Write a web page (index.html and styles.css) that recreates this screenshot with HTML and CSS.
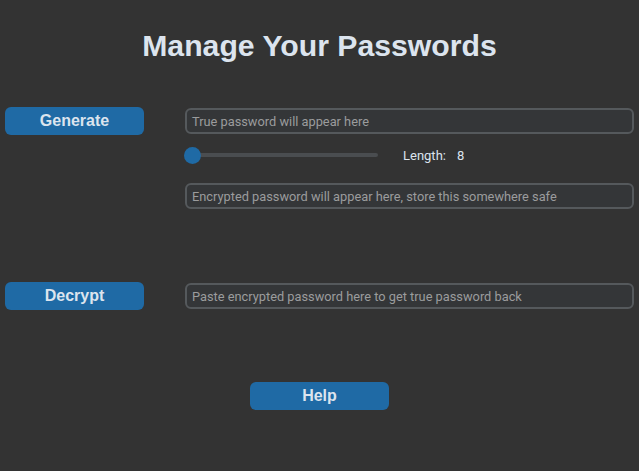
FILE: index.html
```html
<!DOCTYPE html>
<html lang="en">
<head>
<meta charset="utf-8">
<title>Manage Your Passwords</title>
<link rel="stylesheet" href="styles.css">
</head>
<body>
<main class="app">
  <h1 class="title">Manage Your Passwords</h1>

  <section class="row row-generate">
    <button class="btn">Generate</button>
    <div class="col">
      <div class="entry"><span class="placeholder">True password will appear here</span></div>
      <div class="slider-row">
        <div class="slider">
          <div class="track"></div>
          <div class="thumb"></div>
        </div>
        <span class="label">Length:</span>
        <span class="label value">8</span>
      </div>
      <div class="entry entry-enc"><span class="placeholder">Encrypted password will appear here, store this somewhere safe</span></div>
    </div>
  </section>

  <section class="row row-decrypt">
    <button class="btn">Decrypt</button>
    <div class="col">
      <div class="entry"><span class="placeholder">Paste encrypted password here to get true password back</span></div>
    </div>
  </section>

  <div class="help-wrap">
    <button class="btn">Help</button>
  </div>
</main>
</body>
</html>
```

FILE: styles.css
```css
html, body {
  margin: 0;
  padding: 0;
  background: #333333;
  height: 100%;
}

.app {
  padding: 0 5px 0 5px;
  font-family: Roboto, "Liberation Sans", sans-serif;
}

.title {
  margin: 0;
  padding-top: 29px;
  font-family: "Liberation Sans", Arial, sans-serif;
  font-weight: bold;
  font-size: 30.2px;
  line-height: 34px;
  color: #dce4ee;
  text-align: center;
}

.row {
  display: grid;
  grid-template-columns: 139px 1fr;
  column-gap: 41px;
  align-items: start;
}

.row-generate {
  margin-top: 44px;
}

.row-decrypt {
  margin-top: 73px;
}

.btn {
  display: block;
  width: 139px;
  height: 28px;
  margin: 0;
  padding: 0;
  border: none;
  border-radius: 6px;
  background: #1f6aa5;
  color: #dce4ee;
  font-family: "Liberation Sans", Arial, sans-serif;
  font-weight: bold;
  font-size: 16px;
  line-height: 28px;
  text-align: center;
}

.col {
  display: flex;
  flex-direction: column;
  margin-top: 1px;
}

.entry {
  box-sizing: border-box;
  height: 26px;
  border: 2px solid #55595c;
  border-radius: 6px;
  background: #343638;
  padding: 0 0 0 5px;
  display: flex;
  align-items: center;
}

.placeholder {
  font-size: 12.8px;
  color: #9b9c9d;
  white-space: nowrap;
}

.slider-row {
  display: flex;
  align-items: center;
  height: 17px;
  margin-top: 13px;
}

.slider {
  position: relative;
  width: 194px;
  height: 17px;
  margin-left: -1px;
}

.track {
  position: absolute;
  left: 2px;
  right: 0;
  top: 6px;
  height: 4px;
  border-radius: 2px;
  background: #4a4d50;
}

.thumb {
  position: absolute;
  left: 0;
  top: 0;
  width: 17px;
  height: 17px;
  border-radius: 50%;
  background: #1f6aa5;
}

.label {
  font-size: 13px;
  color: #dce4ee;
  margin-left: 25px;
}

.value {
  margin-left: 11px;
}

.entry-enc {
  margin-top: 19px;
}

.help-wrap {
  display: flex;
  justify-content: center;
  margin-top: 72px;
}
```
